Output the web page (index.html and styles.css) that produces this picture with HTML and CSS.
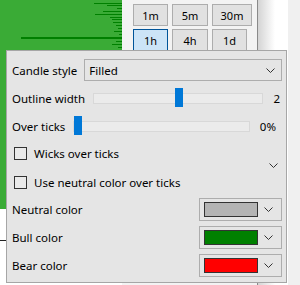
FILE: index.html
```html
<!DOCTYPE html>
<html lang="en">
<head>
    <meta charset="UTF-8">
    <title>Candle settings</title>
    <link rel="stylesheet" href="styles.css">
</head>
<body>
    <div class="workspace">
        <div class="chart">
            <svg class="chart-plot" width="122" height="209" viewBox="0 0 122 209">
                <rect width="122" height="209" fill="#3aab36"/>
                <g fill="#008000">
                    <rect x="94" y="3" width="28" height="1"/>
                    <rect x="107" y="5" width="15" height="1"/>
                    <rect x="117" y="8" width="5" height="1"/>
                    <rect x="103" y="11" width="19" height="1"/>
                    <rect x="95" y="14" width="27" height="1"/>
                    <rect x="110" y="17" width="12" height="1"/>
                    <rect x="112" y="19" width="10" height="1"/>
                    <rect x="113" y="22" width="9" height="1"/>
                    <rect x="116" y="25" width="6" height="1"/>
                    <rect x="118" y="28" width="4" height="1"/>
                    <rect x="114" y="31" width="8" height="1"/>
                    <rect x="119" y="34" width="3" height="1"/>
                    <rect x="21" y="37" width="101" height="2"/>
                    <rect x="116" y="41" width="6" height="1"/>
                    <rect x="112" y="44" width="10" height="1"/>
                    <rect x="118" y="47" width="4" height="1"/>
                </g>
            </svg>
            <div class="chart-foot"></div>
        </div>
        <div class="toolbar">
            <div class="intervals">
                <button class="interval w1">1m</button>
                <button class="interval w2">5m</button>
                <button class="interval w3">30m</button>
                <button class="interval w1 selected">1h</button>
                <button class="interval w2">4h</button>
                <button class="interval w4">1d</button>
            </div>
        </div>
        <div class="splitter"></div>
        <div class="shade"></div>
        <div class="side"></div>
    </div>

    <div class="popup">
        <div class="row">
            <span class="label">Candle style</span>
            <div class="select">
                <span>Filled</span>
                <svg class="chevron" width="9" height="5" viewBox="0 0 9 5"><polyline points="0.5,0.5 4.5,4.5 8.5,0.5"/></svg>
            </div>
        </div>
        <div class="row slider-row outline">
            <span class="label">Outline width</span>
            <div class="track"><div class="thumb" style="left: 48%"></div></div>
            <span class="value">2</span>
        </div>
        <div class="row slider-row ticks">
            <span class="label">Over ticks</span>
            <div class="track"><div class="thumb" style="left: 0%"></div></div>
            <span class="value">0%</span>
        </div>
        <div class="check-group">
            <div class="checks">
                <label class="check"><span class="box"></span>Wicks over ticks</label>
                <label class="check"><span class="box"></span>Use neutral color over ticks</label>
            </div>
            <svg class="chevron more" width="9" height="5" viewBox="0 0 9 5"><polyline points="0.5,0.5 4.5,4.5 8.5,0.5"/></svg>
        </div>
        <div class="row color-row first">
            <span class="label">Neutral color</span>
            <div class="color-pick">
                <span class="swatch neutral"></span>
                <svg class="chevron" width="9" height="5" viewBox="0 0 9 5"><polyline points="0.5,0.5 4.5,4.5 8.5,0.5"/></svg>
            </div>
        </div>
        <div class="row color-row">
            <span class="label">Bull color</span>
            <div class="color-pick">
                <span class="swatch bull"></span>
                <svg class="chevron" width="9" height="5" viewBox="0 0 9 5"><polyline points="0.5,0.5 4.5,4.5 8.5,0.5"/></svg>
            </div>
        </div>
        <div class="row color-row">
            <span class="label">Bear color</span>
            <div class="color-pick">
                <span class="swatch bear"></span>
                <svg class="chevron" width="9" height="5" viewBox="0 0 9 5"><polyline points="0.5,0.5 4.5,4.5 8.5,0.5"/></svg>
            </div>
        </div>
    </div>
</body>
</html>
```

FILE: styles.css
```css
body {
    margin: 0;
    width: 300px;
    height: 285px;
    overflow: hidden;
    font-family: "Noto Sans", sans-serif;
    font-size: 11.5px;
    color: #000;
    background-color: #f0f0f0;
}
.workspace {
    display: flex;
    height: 285px;
}
.chart {
    width: 122px;
    background-color: #fff;
}
.chart-plot {
    display: block;
}
.chart-foot {
    height: 31px;
    border-bottom: 1px solid #222;
}
.toolbar {
    width: 135px;
    background-color: #f3f3f3;
}
.intervals {
    display: grid;
    grid-template-columns: 35px 36px 40px;
    column-gap: 4px;
    row-gap: 3px;
    padding: 4px 0 0 11px;
}
.interval {
    height: 22px;
    padding: 0;
    font-family: inherit;
    font-size: 11px;
    color: #000;
    background-color: #e1e1e1;
    border: 1px solid #adadad;
}
.interval.w4 {
    width: 35px;
}
.interval.selected {
    background-color: #cce4f7;
    border-color: #005499;
}
.splitter {
    width: 1px;
    background-color: #8a8a8a;
}
.shade {
    width: 17px;
    background: linear-gradient(to right, #d4d4d4, #fff);
}
.side {
    width: 13px;
    background-color: #fff;
    border-right: 12px solid #f0f0f0;
}
.popup {
    position: absolute;
    left: 6px;
    top: 50px;
    width: 270px;
    height: 231px;
    padding: 0 4px 0 5px;
    background-color: #e5e5e5;
    border: 1px solid #a6a6a6;
}
.row {
    display: flex;
    align-items: center;
}
.row:first-child {
    margin-top: 8px;
    height: 22px;
}
.select {
    flex: 1;
    display: flex;
    align-items: center;
    justify-content: space-between;
    height: 20px;
    margin-left: 7px;
    padding: 0 6px 0 4px;
    border: 1px solid #adadad;
}
.chevron {
    display: block;
}
.chevron polyline {
    fill: none;
    stroke: #333;
    stroke-width: 1;
}
.slider-row {
    height: 20px;
}
.outline {
    margin-top: 7px;
}
.ticks {
    margin-top: 8px;
}
.track {
    position: relative;
    flex: 1;
    height: 9px;
    margin: 0 10px 0 8px;
    background-color: #ebebeb;
    border: 1px solid #d8d8d8;
}
.thumb {
    position: absolute;
    top: -6px;
    width: 8px;
    height: 19px;
    background-color: #0078d7;
}
.value {
    padding-right: 2px;
}
.ticks .value {
    padding-right: 6px;
}
.check-group {
    display: flex;
    align-items: center;
    justify-content: space-between;
    margin-top: 7px;
    padding-right: 4px;
}
.checks {
    display: flex;
    flex-direction: column;
    gap: 9px;
}
.check {
    display: flex;
    align-items: center;
    height: 20px;
    padding-left: 2px;
}
.box {
    width: 11px;
    height: 11px;
    margin-right: 7px;
    background-color: #eaeaea;
    border: 1px solid #333;
}
.more {
    margin-top: -5px;
}
.color-row {
    justify-content: space-between;
    height: 23px;
    margin-top: 5px;
}
.color-row.first {
    margin-top: 6px;
}
.color-pick {
    display: flex;
    align-items: center;
    gap: 6px;
    width: 72px;
    height: 21px;
    padding: 0 5px 0 4px;
    border: 1px solid #adadad;
}
.swatch {
    width: 52px;
    height: 13px;
    border: 1px solid #333;
}
.neutral {
    background-color: #b4b4b4;
}
.bull {
    background-color: #008000;
}
.bear {
    background-color: #ff0000;
}
```
